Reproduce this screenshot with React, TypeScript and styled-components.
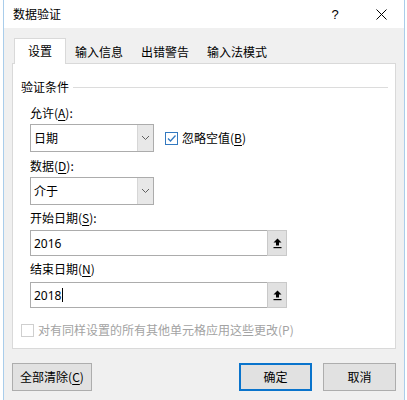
import React from "react";
import styled, { createGlobalStyle } from "styled-components";

const Global = createGlobalStyle`
  html, body { margin: 0; padding: 0; background: #ffffff; }
  body { font-family: "Noto Sans CJK SC", "Noto Sans", sans-serif; font-size: 12px; color: #000; }
  * { box-sizing: border-box; }
`;

const Screen = styled.div`
  width: 407px;
  height: 400px;
  display: flex;
  background: #ffffff;
  overflow: hidden;
`;

const Window = styled.div`
  margin-left: 3px;
  width: 402px;
  height: 400px;
  border-left: 1px solid #a9cdeb;
  border-right: 1px solid #a9cdeb;
  display: flex;
  flex-direction: column;
  background: #f0f0f0;
`;

const TitleBar = styled.div`
  height: 28px;
  background: #ffffff;
  display: flex;
  align-items: center;
  padding-left: 9px;
  flex-shrink: 0;
`;

const Title = styled.span`
  flex: 1;
  font-size: 12px;
  line-height: 16px;
`;

const TitleButton = styled.div<{ $w: number }>`
  width: ${(p) => p.$w}px;
  height: 28px;
  display: flex;
  align-items: center;
  justify-content: center;
  font-family: "Liberation Sans", sans-serif;
  font-size: 13px;
`;

const Body = styled.div`
  flex: 1;
  display: flex;
  flex-direction: column;
  padding: 10px 8px 0 8px;
`;

const TabRow = styled.div`
  display: flex;
  align-items: flex-end;
  padding-left: 2px;
  height: 25px;
  position: relative;
  z-index: 1;
`;

const Tab = styled.div<{ $active?: boolean }>`
  height: ${(p) => (p.$active ? 26 : 22)}px;
  padding: 0 ${(p) => (p.$active ? 13 : 9)}px;
  display: flex;
  align-items: center;
  line-height: 16px;
  background: ${(p) => (p.$active ? "#ffffff" : "transparent")};
  border: ${(p) => (p.$active ? "1px solid #d9d9d9" : "none")};
  border-bottom: none;
  margin-bottom: ${(p) => (p.$active ? -1 : 0)}px;
  padding-bottom: ${(p) => (p.$active ? 1 : 0)}px;
`;

const Panel = styled.div`
  width: 384px;
  height: 286px;
  background: #ffffff;
  border: 1px solid #d9d9d9;
  padding: 15px 0 0 8px;
  display: flex;
  flex-direction: column;
`;

const GroupHeader = styled.div`
  display: flex;
  align-items: center;
  height: 16px;
  line-height: 16px;
  width: 367px;
  gap: 4px;
`;

const GroupLine = styled.div`
  flex: 1;
  height: 1px;
  background: #dcdcdc;
`;

const Content = styled.div`
  padding-left: 9px;
  display: flex;
  flex-direction: column;
`;

const Label = styled.div<{ $mt: number }>`
  height: 16px;
  line-height: 16px;
  margin-top: ${(p) => p.$mt}px;
  u { text-decoration: underline; text-underline-offset: 2px; }
`;

const Row = styled.div<{ $mt: number }>`
  display: flex;
  align-items: center;
  margin-top: ${(p) => p.$mt}px;
`;

const Select = styled.div`
  width: 124px;
  height: 28px;
  border: 1px solid #acacac;
  background: #ffffff;
  display: flex;
  align-items: stretch;
`;

const SelectValue = styled.div`
  flex: 1;
  display: flex;
  align-items: center;
  padding-left: 3px;
  line-height: 16px;
`;

const DropButton = styled.div`
  width: 16px;
  background: #e8e8e8;
  border-left: 1px solid #d6d6d6;
  display: flex;
  align-items: center;
  justify-content: center;
`;

const CheckRow = styled.div<{ $disabled?: boolean }>`
  display: flex;
  align-items: center;
  gap: 4px;
  color: ${(p) => (p.$disabled ? "#a3a3a3" : "#000")};
  line-height: 16px;
  u { text-decoration: underline; text-underline-offset: 2px; }
`;

const CheckBox = styled.div<{ $disabled?: boolean }>`
  width: 13px;
  height: 13px;
  border: 1px solid ${(p) => (p.$disabled ? "#cfcfcf" : "#3379c0")};
  background: #ffffff;
  display: flex;
  align-items: center;
  justify-content: center;
`;

const RefInput = styled.div<{ $mt: number }>`
  width: 257px;
  height: 26px;
  margin-top: ${(p) => p.$mt}px;
  border: 1px solid #acacac;
  background: #ffffff;
  display: flex;
  align-items: stretch;
`;

const InputValue = styled.div`
  flex: 1;
  display: flex;
  align-items: center;
  padding-left: 3px;
  font-family: "Noto Sans", sans-serif;
  font-size: 12px;
`;

const Caret = styled.span`
  display: inline-block;
  width: 1px;
  height: 14px;
  background: #000;
  margin-left: 1px;
`;

const RefButton = styled.div`
  width: 20px;
  margin: -1px -1px -1px 0;
  background: #e1e1e1;
  border: 1px solid #c9c9c9;
  display: flex;
  align-items: center;
  justify-content: center;
`;

const Footer = styled.div`
  display: flex;
  margin-top: 14px;
  align-items: center;
`;

const Button = styled.div<{ $w: number; $primary?: boolean; $ml?: number }>`
  width: ${(p) => p.$w}px;
  height: 28px;
  margin-left: ${(p) => p.$ml ?? 0}px;
  background: #e1e1e1;
  border: ${(p) => (p.$primary ? "2px solid #0a74cc" : "1px solid #adadad")};
  display: flex;
  align-items: center;
  justify-content: center;
  line-height: 16px;
  u { text-decoration: underline; text-underline-offset: 2px; }
`;

const Chevron = () => (
  <svg width="9" height="6" viewBox="0 0 9 6">
    <path d="M1 1 L4.5 4.5 L8 1" fill="none" stroke="#606060" strokeWidth="1" />
  </svg>
);

const Check = () => (
  <svg width="11" height="11" viewBox="0 0 11 11">
    <path d="M2 5.5 L4.5 8 L9.5 2.5" fill="none" stroke="#3379c0" strokeWidth="1.3" />
  </svg>
);

const UpArrow = () => (
  <svg width="9" height="11" viewBox="0 0 9 11">
    <path d="M4.5 0.5 L8.5 4.5 L6 4.5 L6 7.5 L3 7.5 L3 4.5 L0.5 4.5 Z" fill="#000" />
    <rect x="0.5" y="9" width="8" height="1.2" fill="#000" />
  </svg>
);

const Close = () => (
  <svg width="11" height="11" viewBox="0 0 11 11">
    <path d="M0.5 0.5 L10.5 10.5 M10.5 0.5 L0.5 10.5" stroke="#000" strokeWidth="1" />
  </svg>
);

export default function App() {
  return (
    <Screen>
      <Global />
      <Window>
        <TitleBar>
          <Title>数据验证</Title>
          <TitleButton $w={46}>?</TitleButton>
          <TitleButton $w={46}>
            <Close />
          </TitleButton>
        </TitleBar>
        <Body>
          <TabRow>
            <Tab $active>设置</Tab>
            <Tab>输入信息</Tab>
            <Tab>出错警告</Tab>
            <Tab>输入法模式</Tab>
          </TabRow>
          <Panel>
            <GroupHeader>
              <span>验证条件</span>
              <GroupLine />
            </GroupHeader>
            <Content>
              <Label $mt={10}>
                允许(<u>A</u>):
              </Label>
              <Row $mt={3}>
                <Select>
                  <SelectValue>日期</SelectValue>
                  <DropButton>
                    <Chevron />
                  </DropButton>
                </Select>
                <CheckRow style={{ marginLeft: 11 }}>
                  <CheckBox>
                    <Check />
                  </CheckBox>
                  <span>
                    忽略空值(<u>B</u>)
                  </span>
                </CheckRow>
              </Row>
              <Label $mt={6}>
                数据(<u>D</u>):
              </Label>
              <Row $mt={3}>
                <Select>
                  <SelectValue>介于</SelectValue>
                  <DropButton>
                    <Chevron />
                  </DropButton>
                </Select>
              </Row>
              <Label $mt={5}>
                开始日期(<u>S</u>):
              </Label>
              <RefInput $mt={4}>
                <InputValue>2016</InputValue>
                <RefButton>
                  <UpArrow />
                </RefButton>
              </RefInput>
              <Label $mt={5}>
                结束日期(<u>N</u>)
              </Label>
              <RefInput $mt={5}>
                <InputValue>
                  2018
                  <Caret />
                </InputValue>
                <RefButton>
                  <UpArrow />
                </RefButton>
              </RefInput>
            </Content>
            <Row $mt={14}>
              <CheckRow $disabled>
                <CheckBox $disabled />
                <span>对有同样设置的所有其他单元格应用这些更改(P)</span>
              </CheckRow>
            </Row>
          </Panel>
          <Footer>
            <Button $w={80}>
              全部清除(<u>C</u>)
            </Button>
            <Button $w={73} $primary $ml={147}>
              确定
            </Button>
            <Button $w={73} $ml={11}>
              取消
            </Button>
          </Footer>
        </Body>
      </Window>
    </Screen>
  );
}
